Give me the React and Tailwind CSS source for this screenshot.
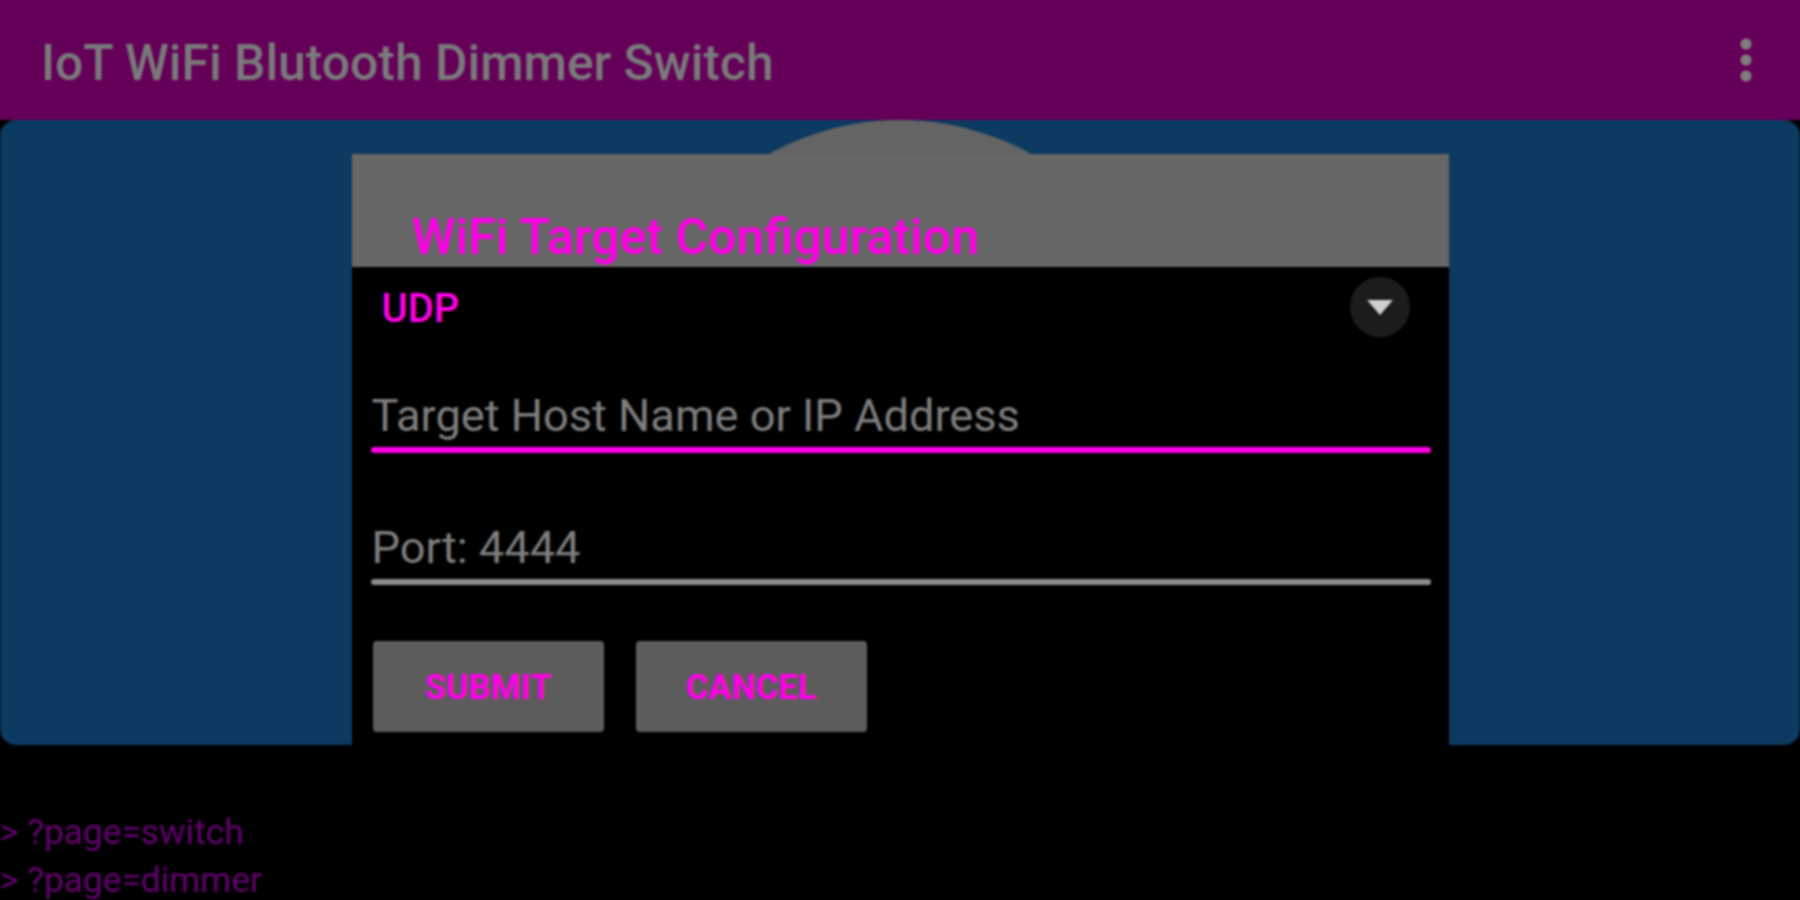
const font = { fontFamily: 'Roboto, sans-serif' };

function MoreIcon() {
  return (
    <svg width="12" height="44" viewBox="0 0 12 44" className="fill-[#808080]">
      <circle cx="6" cy="6" r="5.5" />
      <circle cx="6" cy="22" r="5.5" />
      <circle cx="6" cy="38" r="5.5" />
    </svg>
  );
}

function Field({ label, underline, className }) {
  return (
    <div className={`flex flex-col ${className}`}>
      <div className="h-[56px] pl-[1px] text-[45.2px] leading-[50px] text-[#7e7e7e]">{label}</div>
      <div className={`h-[6px] rounded-full ${underline}`} />
    </div>
  );
}

function DialogButton({ children }) {
  return (
    <button className="flex h-[91px] w-[231px] items-center justify-center rounded-[4px] bg-[#5c5c5c] pt-[3px] text-[34.5px] font-bold text-[#ff00e6]">
      {children}
    </button>
  );
}

export default function App() {
  return (
    <div className="h-[900px] w-[1800px] overflow-hidden bg-black" style={font}>
      {/* slightly oversized so the blur does not fade at the page edge */}
      <div className="-ml-[4px] -mt-[4px] h-[908px] w-[1808px] blur-[0.8px]">
        <header className="flex h-[124px] items-center justify-between bg-[#640058] pl-[45px] pr-[52px] pt-[10px]">
          <h1 className="text-[49.8px] font-medium text-[#7a7a7a]">IoT WiFi Blutooth Dimmer Switch</h1>
          <div className="-mt-[6px]">
            <MoreIcon />
          </div>
        </header>

        <main className="relative ml-[4px] flex h-[625px] w-[1800px] justify-center overflow-hidden rounded-[16px] bg-[#0c3a60] pt-[34px]">
          {/* gauge behind the dialog, only its top shows */}
          <div className="absolute left-[630px] top-0 h-[540px] w-[540px] rounded-full bg-[#646464]" />

          <section className="relative flex h-[591px] w-[1097px] flex-col bg-black">
            <div className="flex h-[113px] items-end bg-[#676767] pl-[60px] text-[50px] font-medium leading-[60px] text-[#ff00e6]">
              WiFi Target Configuration
            </div>

            <div className="flex h-[80px] items-center justify-between pl-[30px] pr-[39px]">
              <span className="pt-[3px] text-[40px] font-medium text-[#ff00e6]">UDP</span>
              <div className="flex h-[60px] w-[60px] items-center justify-center rounded-full bg-[#1c1c1c]">
                <div className="h-0 w-0 border-x-[13px] border-t-[15px] border-x-transparent border-t-[#cfcfcf]" />
              </div>
            </div>

            <Field label="Target Host Name or IP Address" underline="bg-[#ff00e6]" className="ml-[19px] mr-[18px] mt-[44px]" />
            <Field label="Port: 4444" underline="bg-[#8c8c8c]" className="ml-[19px] mr-[18px] mt-[70px]" />

            <div className="ml-[21px] mt-[56px] flex gap-[32px]">
              <DialogButton>SUBMIT</DialogButton>
              <DialogButton>CANCEL</DialogButton>
            </div>
          </section>
        </main>

        <div className="ml-[4px] pt-[63px] text-[35.3px] leading-[48px] text-[#640070]">
          <p>&gt; ?page=switch</p>
          <p>&gt; ?page=dimmer</p>
        </div>
      </div>
    </div>
  );
}
